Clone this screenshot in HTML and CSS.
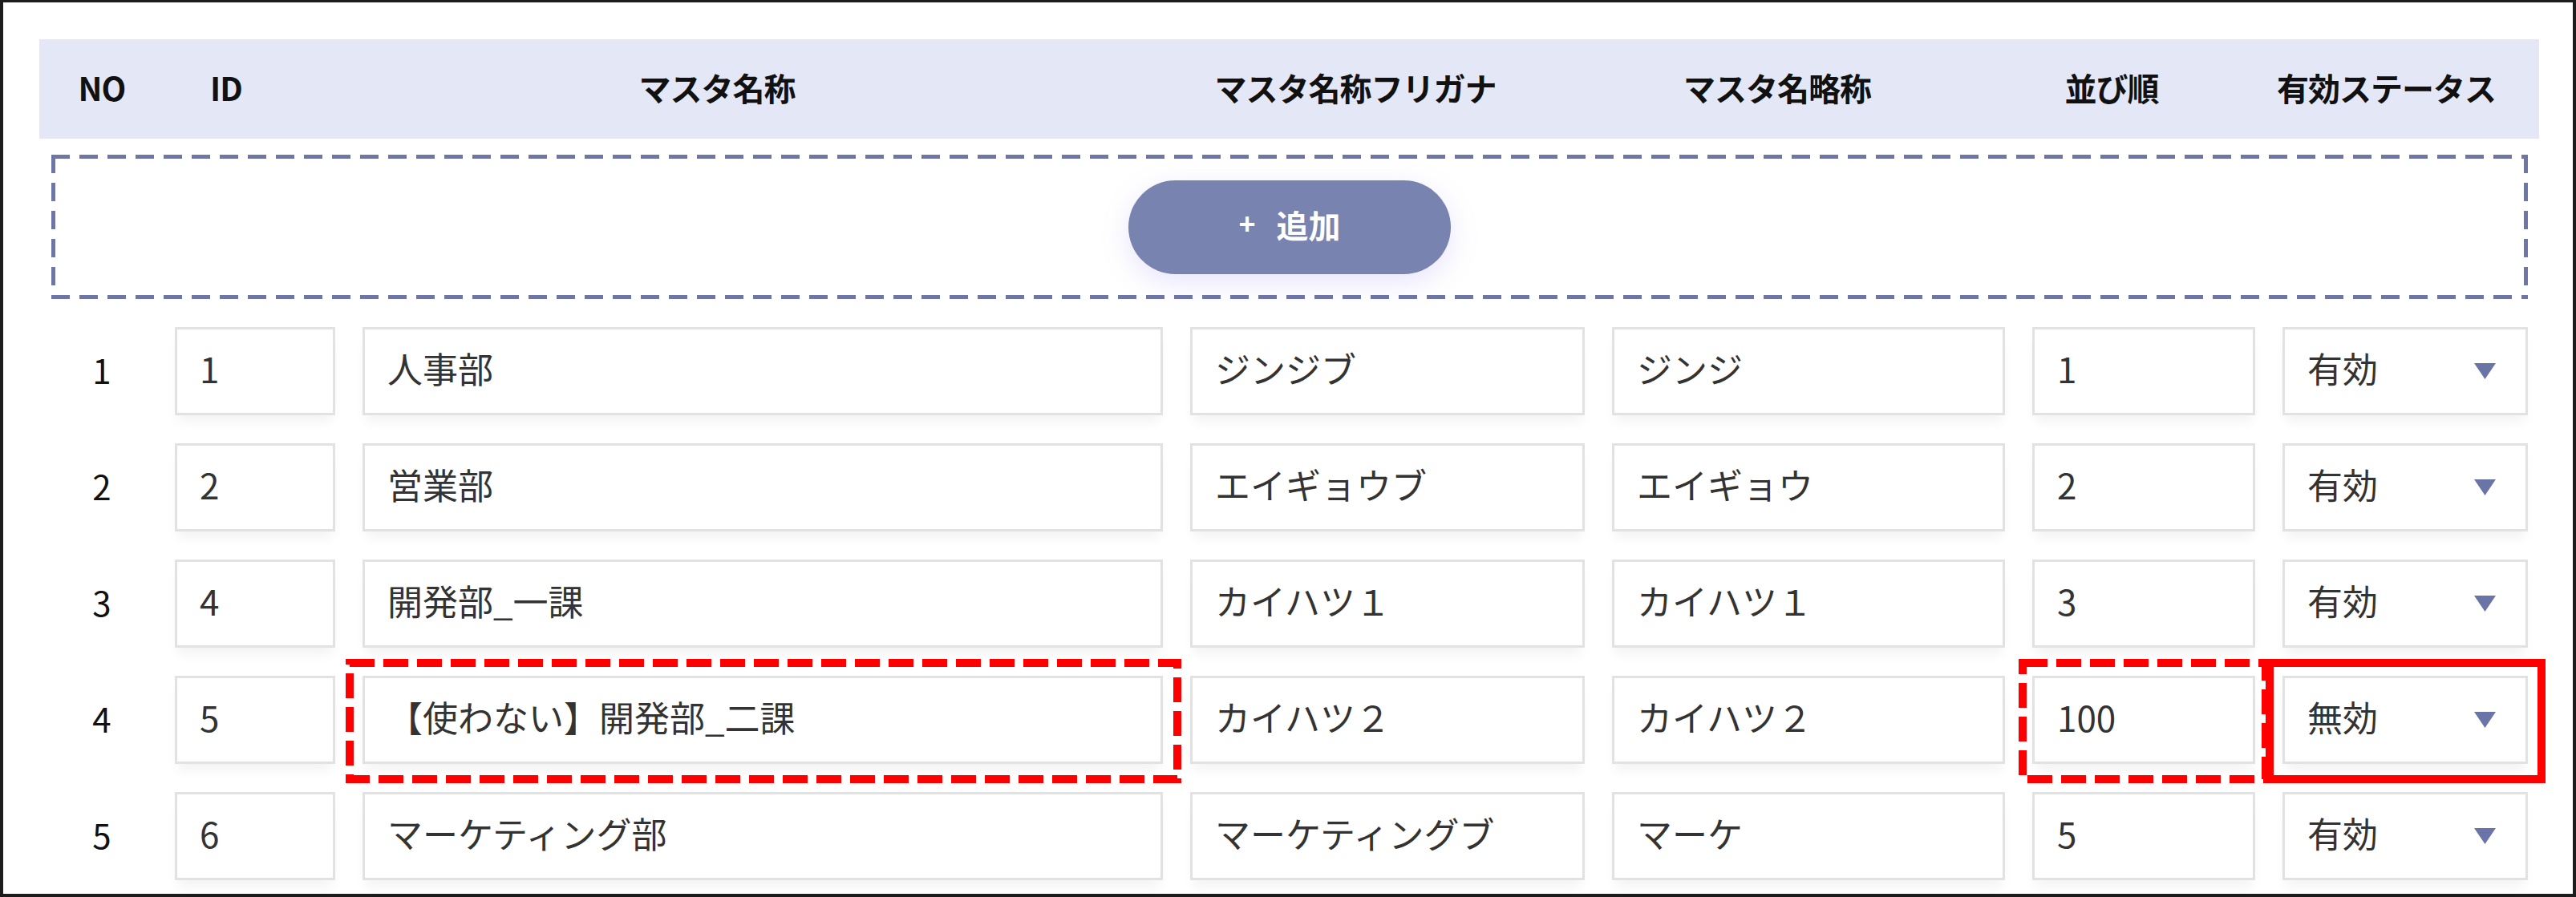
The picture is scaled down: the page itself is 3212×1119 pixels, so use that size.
FILE: index.html
```html
<!DOCTYPE html>
<html lang="ja">
<head>
<meta charset="utf-8">
<title>マスタ一覧</title>
<link rel="stylesheet" href="styles.css">
</head>
<body>
<div class="frame">
  <div class="thead">
    <div class="th">NO</div>
    <div class="th">ID</div>
    <div class="th">マスタ名称</div>
    <div class="th">マスタ名称フリガナ</div>
    <div class="th">マスタ名略称</div>
    <div class="th">並び順</div>
    <div class="th">有効ステータス</div>
  </div>

  <div class="add-area">
    <button class="add-btn"><span class="plus">+</span><span>追加</span></button>
  </div>

  <div class="rows">
    <div class="row">
      <div class="no">1</div>
      <div class="field">1</div>
      <div class="field">人事部</div>
      <div class="field">ジンジブ</div>
      <div class="field">ジンジ</div>
      <div class="field">1</div>
      <div class="field select"><span>有効</span><svg class="caret" width="27" height="20" viewBox="0 0 27 20"><polygon points="0,0 27,0 13.5,20"/></svg></div>
    </div>
    <div class="row">
      <div class="no">2</div>
      <div class="field">2</div>
      <div class="field">営業部</div>
      <div class="field">エイギョウブ</div>
      <div class="field">エイギョウ</div>
      <div class="field">2</div>
      <div class="field select"><span>有効</span><svg class="caret" width="27" height="20" viewBox="0 0 27 20"><polygon points="0,0 27,0 13.5,20"/></svg></div>
    </div>
    <div class="row">
      <div class="no">3</div>
      <div class="field">4</div>
      <div class="field">開発部_一課</div>
      <div class="field">カイハツ１</div>
      <div class="field">カイハツ１</div>
      <div class="field">3</div>
      <div class="field select"><span>有効</span><svg class="caret" width="27" height="20" viewBox="0 0 27 20"><polygon points="0,0 27,0 13.5,20"/></svg></div>
    </div>
    <div class="row">
      <div class="no">4</div>
      <div class="field">5</div>
      <div class="field">【使わない】開発部_二課<svg class="annot annot-name" width="1042" height="155" viewBox="0 0 1042 155"><rect x="5" y="5" width="1032" height="145"/></svg></div>
      <div class="field">カイハツ２</div>
      <div class="field">カイハツ２</div>
      <div class="field">100<svg class="annot annot-sort" width="313" height="155" viewBox="0 0 313 155"><rect x="5" y="5" width="303" height="145"/></svg></div>
      <div class="field select"><span>無効</span><svg class="caret" width="27" height="20" viewBox="0 0 27 20"><polygon points="0,0 27,0 13.5,20"/></svg><div class="annot-solid"></div></div>
    </div>
    <div class="row">
      <div class="no">5</div>
      <div class="field">6</div>
      <div class="field">マーケティング部</div>
      <div class="field">マーケティングブ</div>
      <div class="field">マーケ</div>
      <div class="field">5</div>
      <div class="field select"><span>有効</span><svg class="caret" width="27" height="20" viewBox="0 0 27 20"><polygon points="0,0 27,0 13.5,20"/></svg></div>
    </div>
  </div>
</div>
</body>
</html>
```

FILE: styles.css
```css
html, body {
  margin: 0;
  padding: 0;
  background: #ffffff;
}

body {
  font-family: "Noto Sans CJK JP", "Noto Sans", sans-serif;
  color: #333333;
}

.frame {
  box-sizing: border-box;
  width: 3212px;
  height: 1119px;
  border: 4px solid #1c1c1c;
  border-top-width: 3px;
  padding: 46px 42px 0 45px;
  overflow: hidden;
  background: #ffffff;
}

/* header */
.thead {
  display: grid;
  grid-template-columns: 156px 154px 1070px 522px 530px 304px 381px;
  height: 124px;
  background: #e4e8f6;
}

.th {
  display: flex;
  align-items: center;
  justify-content: center;
  padding-bottom: 4px;
  box-sizing: border-box;
  font-size: 40px;
  font-weight: 700;
  color: #111111;
  letter-spacing: -1px;
}

/* add area */
.add-area {
  margin: 20px 14px 0 15px;
  height: 180px;
  display: flex;
  align-items: center;
  justify-content: center;
  background:
    repeating-linear-gradient(90deg, #6d76a4 0 23px, transparent 23px 35px) left top / 100% 5px no-repeat,
    repeating-linear-gradient(90deg, #6d76a4 0 23px, transparent 23px 35px) left bottom / 100% 5px no-repeat,
    repeating-linear-gradient(180deg, #6d76a4 0 23px, transparent 23px 35px) left top / 5px 100% no-repeat,
    repeating-linear-gradient(180deg, #6d76a4 0 23px, transparent 23px 35px) right top / 5px 100% no-repeat;
}

.add-btn {
  width: 402px;
  height: 117px;
  border: none;
  border-radius: 59px;
  background: #7983b0;
  color: #ffffff;
  font-family: "Noto Sans CJK JP", "Noto Sans", sans-serif;
  font-size: 40px;
  font-weight: 700;
  display: flex;
  align-items: center;
  justify-content: center;
  gap: 26px;
  padding: 0 0 6px 0;
  box-shadow: 0 10px 34px rgba(150, 130, 230, 0.22);
}

.add-btn .plus {
  font-family: "Liberation Sans", sans-serif;
  font-size: 36px;
  font-weight: 700;
}

/* rows */
.rows {
  margin-top: 35px;
  display: flex;
  flex-direction: column;
  gap: 35px;
}

.row {
  display: grid;
  grid-template-columns: 135px 200px 998px 492px 490px 278px 306px;
  column-gap: 34px;
  height: 110px;
}

.no {
  display: flex;
  align-items: center;
  justify-content: center;
  padding-left: 21px;
  padding-bottom: 6px;
  font-size: 42px;
  color: #111111;
}

.field {
  position: relative;
  box-sizing: border-box;
  border: 3px solid #e2e2e2;
  background: #ffffff;
  box-shadow: 0 12px 14px -4px rgba(0, 0, 0, 0.05);
  display: flex;
  align-items: center;
  padding: 0 0 8px 28px;
  font-size: 44px;
  color: #333333;
  white-space: nowrap;
}

.select {
  justify-content: space-between;
  padding-right: 37px;
}

.caret {
  fill: #6b74a6;
  margin-top: 8px;
}

/* annotation overlays */
.annot {
  position: absolute;
  top: -24px;
  pointer-events: none;
}

.annot rect {
  fill: none;
  stroke: #ff0000;
  stroke-width: 10;
  stroke-dasharray: 31 11;
}

.annot-name {
  left: -24px;
}

.annot-sort {
  left: -20px;
}

.annot-solid {
  position: absolute;
  left: -24px;
  top: -24px;
  width: 349px;
  height: 155px;
  box-sizing: border-box;
  border: 10px solid #ff0000;
  pointer-events: none;
}
```
